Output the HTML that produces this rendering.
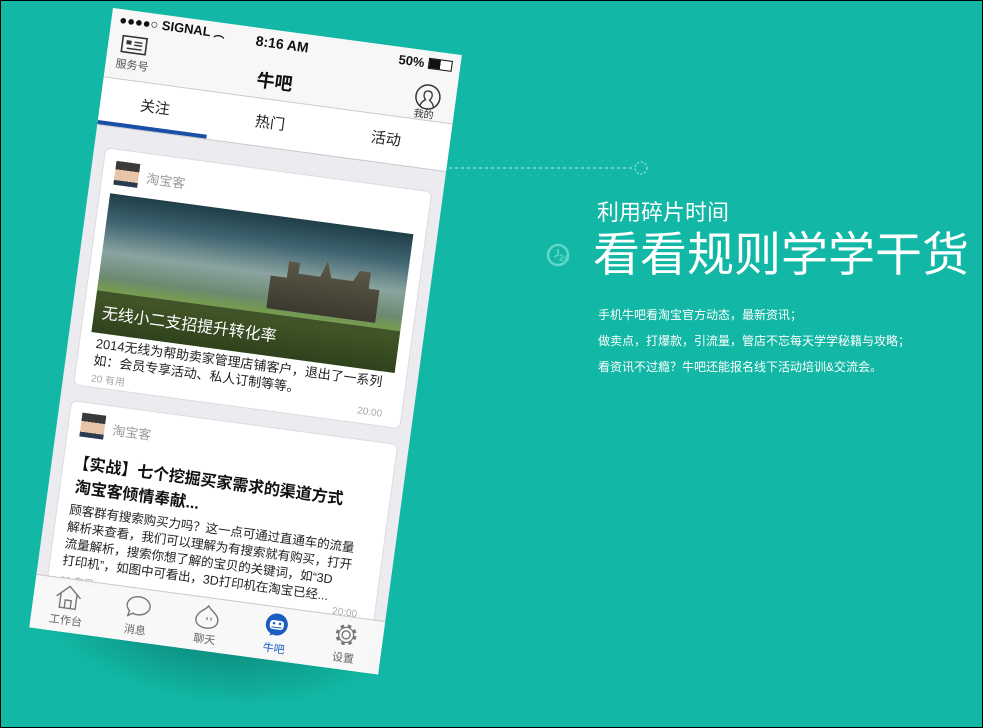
<!DOCTYPE html>
<html><head><meta charset="utf-8"><style>
*{margin:0;padding:0;box-sizing:border-box}
body{width:983px;height:728px;overflow:hidden;background:#000;font-family:"Liberation Sans","Noto Sans CJK SC",sans-serif}
#bg{position:absolute;left:1px;top:1px;width:981px;height:726px;background:#12b8a5;overflow:hidden}
#shadow{position:absolute;left:40px;top:560px;width:360px;height:120px;transform-origin:0 0;transform:rotate(7.7deg);background:radial-gradient(ellipse at 50% 30%,rgba(0,50,45,.45),rgba(0,50,45,0) 70%)}
#phone{position:absolute;left:112px;top:7px;width:352px;height:625px;transform-origin:0 0;transform:rotate(7.7deg);background:#ebebf0;overflow:hidden}
.abs{position:absolute}
.status{left:0;top:0;width:352px;height:70px;background:#f7f7f7;border-bottom:1px solid #c8c8cc}
.tabs{left:0;top:70px;width:352px;height:48px;background:#fff;border-bottom:1px solid #c8c8cc}
.card{position:absolute;left:11px;width:330px;background:#fff;border-radius:6px;border:1px solid #dcdce0}
.av{position:absolute;width:24px;height:24px;background:linear-gradient(#3a3a3a 0 35%,#e8c4a8 35% 80%,#2a3a50 80%)}
.name{position:absolute;font-size:13px;color:#999}
.tb{left:0;top:571px;width:352px;height:54px;background:rgba(247,247,247,.93);border-top:1px solid #c8c8cc}
.ti{position:absolute;top:0;width:70px;text-align:center;font-size:11px;color:#666}
.ti svg{display:block;margin:4px auto 1px}
.p{position:absolute;left:597px;font-size:12px;color:#fff;white-space:nowrap}
</style></head><body><div id="bg">
<div id="shadow"></div>
<div id="phone">
 <div class="abs status">
  <div class="abs" style="left:8px;top:3px;font-size:13px;color:#111;font-weight:bold">●●●●○ SIGNAL <span style="font-size:11px">︵</span></div>
  <div class="abs" style="left:146px;top:5px;font-size:14px;color:#111;font-weight:bold">8:16 AM</div>
  <div class="abs" style="left:290px;top:5px;font-size:13px;color:#111;font-weight:bold">50% <span style="display:inline-block;width:24px;height:11px;border:1px solid #111;vertical-align:-1px;background:linear-gradient(90deg,#111 50%,#fff 50%)"></span></div>
  <svg class="abs" style="left:12px;top:24px" width="28" height="20"><rect x="2" y="2" width="24" height="16" fill="none" stroke="#333" stroke-width="1.6"/><rect x="6" y="6" width="5" height="4" fill="#333"/><path d="M14 7h8M14 10h8M7 14h15" stroke="#333" stroke-width="1.4"/></svg>
  <div class="abs" style="left:10px;top:46px;font-size:11px;color:#555">服务号</div>
  <div class="abs" style="left:152px;top:38px;font-size:18px;color:#111;font-weight:bold">牛吧</div>
  <svg class="abs" style="left:310px;top:33px" width="28" height="28"><circle cx="14" cy="13" r="12" fill="none" stroke="#333" stroke-width="1.5"/><path d="M7 23c1-5 4-6 5-7-3-3-3-9 2-9s5 6 2 9c1 1 4 2 5 7" fill="none" stroke="#333" stroke-width="1.3"/></svg>
  <div class="abs" style="left:312px;top:60px;font-size:10px;color:#333;line-height:10px">我的</div>
 </div>
 <div class="abs tabs">
  <div class="abs" style="left:40px;top:12px;font-size:15px;color:#222">关注</div>
  <div class="abs" style="left:156px;top:12px;font-size:15px;color:#222">热门</div>
  <div class="abs" style="left:273px;top:12px;font-size:15px;color:#222">活动</div>
  <div class="abs" style="left:0;top:43px;width:110px;height:4px;background:#1a4fa8"></div>
 </div>
 <div class="card" style="top:139px;height:240px">
  <div class="av" style="left:12px;top:11px"></div>
  <div class="name" style="left:44px;top:14px">淘宝客</div>
  <div class="abs" style="left:10px;top:44px;width:306px;height:140px;background:linear-gradient(180deg,#1f3e48 0%,#3f6470 20%,#8aa3a0 42%,#6d8a70 60%,#7aa43c 74%,#4e7a2a 100%);overflow:hidden">
   <div class="abs" style="left:170px;top:38px;width:110px;height:55px;background:linear-gradient(#5d5a48,#3b3a2e);clip-path:polygon(0 40%,15% 40%,15% 10%,25% 10%,25% 30%,45% 30%,50% 0,55% 30%,75% 30%,80% 10%,90% 10%,90% 40%,100% 40%,100% 100%,0 100%)"></div>
   <div class="abs" style="left:0;top:98px;width:306px;height:42px;background:rgba(20,20,20,.55)"></div>
   <div class="abs" style="left:8px;top:106px;font-size:16px;color:#fff">无线小二支招提升转化率</div>
  </div>
  <div class="abs" style="left:16px;top:186px;width:300px;font-size:13px;line-height:17px;color:#222">2014无线为帮助卖家管理店铺客户，退出了一系列如：会员专享活动、私人订制等等。</div>
  <div class="abs" style="left:16px;top:221px;font-size:10px;color:#aaa">20 有用</div>
  <div class="abs" style="left:284px;top:221px;font-size:10px;color:#aaa">20:00</div>
 </div>
 <div class="card" style="top:394px;height:250px">
  <div class="av" style="left:12px;top:10px"></div>
  <div class="name" style="left:44px;top:13px">淘宝客</div>
  <div class="abs" style="left:10px;top:50px;width:310px;font-size:16px;line-height:24px;color:#111;font-weight:bold">【实战】七个挖掘买家需求的渠道方式<br>&nbsp;淘宝客倾情奉献...</div>
  <div class="abs" style="left:12px;top:100px;width:310px;font-size:12.5px;line-height:17px;color:#222;white-space:nowrap">顾客群有搜索购买力吗？这一点可通过直通车的流量<br>解析来查看，我们可以理解为有搜索就有购买，打开<br>流量解析，搜索你想了解的宝贝的关键词，如“3D<br>打印机”，如图中可看出，3D打印机在淘宝已经...</div>
  <div class="abs" style="left:12px;top:170px;font-size:10px;color:#aaa">20 有用</div>
  <div class="abs" style="left:286px;top:168px;font-size:10px;color:#aaa">20:00</div>
 </div>
 <div class="abs tb">
  <div class="ti" style="left:0"><svg width="30" height="28"><path d="M3 14L15 3l12 11M7 11v14h16V11M12 25v-8h6v8" fill="none" stroke="#777" stroke-width="1.4"/></svg>工作台</div>
  <div class="ti" style="left:70px"><svg width="30" height="28"><path d="M15 4c7 0 12 4 12 9s-5 9-12 9c-2 0-3 0-4-1l-5 3 1-5c-2-2-3-4-3-6 0-5 5-9 11-9z" fill="none" stroke="#777" stroke-width="1.4"/></svg>消息</div>
  <div class="ti" style="left:140px"><svg width="30" height="28"><path d="M15 3c0 4-11 7-11 15 0 5 5 8 11 8s11-3 11-8c0-8-11-11-11-15z" fill="none" stroke="#777" stroke-width="1.4"/><path d="M15 15v3M19 15v3" stroke="#777" stroke-width="1.2"/></svg>聊天</div>
  <div class="ti" style="left:210px;color:#1a5fc0"><svg width="30" height="28"><circle cx="15" cy="13" r="11" fill="#1a5fc0"/><path d="M9 25l2-5 4 2z" fill="#1a5fc0"/><rect x="8" y="9" width="14" height="9" rx="3" fill="#fff"/><circle cx="12" cy="12" r="1.3" fill="#1a5fc0"/><circle cx="18" cy="12" r="1.3" fill="#1a5fc0"/><path d="M10 16h10" stroke="#1a5fc0"/></svg>牛吧</div>
  <div class="ti" style="left:280px"><svg width="30" height="28"><circle cx="15" cy="14" r="4" fill="none" stroke="#777" stroke-width="1.4"/><circle cx="15" cy="14" r="9" fill="none" stroke="#777" stroke-width="3" stroke-dasharray="3.5 3.6"/><circle cx="15" cy="14" r="7.5" fill="none" stroke="#777" stroke-width="1.2"/></svg>设置</div>
 </div>
</div>
<svg class="abs" style="left:440px;top:155px" width="220" height="30"><path d="M8 12H193" stroke="#bfe9e3" stroke-dasharray="3 3"/><circle cx="200" cy="12" r="6" fill="none" stroke="#bfe9e3" stroke-dasharray="2 2"/></svg>
<svg class="abs" style="left:544px;top:240px" width="30" height="30"><circle cx="13" cy="14" r="10" fill="none" stroke="#5fd6c6" stroke-width="2.5"/><path d="M13 8v6l-4 2" stroke="#5fd6c6" stroke-width="1.6" fill="none"/><text x="14" y="20" font-size="9" font-weight="bold" fill="#5fd6c6" font-family="Liberation Sans">24</text></svg>
<div class="abs" style="left:596px;top:194px;font-size:22px;color:#fff">利用碎片时间</div>
<div class="abs" style="left:592px;top:226px;font-size:47px;line-height:56px;color:#fff;letter-spacing:0">看看规则学学干货</div>
<div class="p" style="top:305px">手机牛吧看淘宝官方动态，最新资讯；</div>
<div class="p" style="top:331px">做卖点，打爆款，引流量，管店不忘每天学学秘籍与攻略；</div>
<div class="p" style="top:357px">看资讯不过瘾？牛吧还能报名线下活动培训&amp;交流会。</div>
</div></body></html>
